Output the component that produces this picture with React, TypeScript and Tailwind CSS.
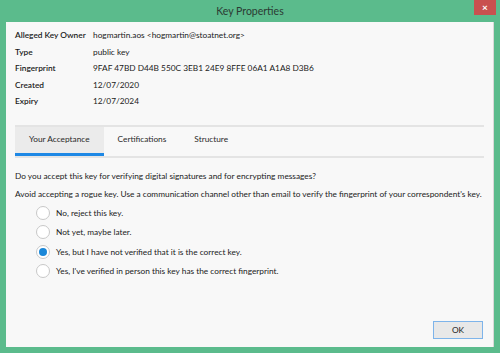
import { useState } from 'react';

const font = { fontFamily: 'Lato, "Noto Sans", sans-serif' };

const props = [
  ['Alleged Key Owner', 'hogmartin.aos <hogmartin@stoatnet.org>'],
  ['Type', 'public key'],
  ['Fingerprint', '9FAF 47BD D44B 550C 3EB1 24E9 8FFE 06A1 A1A8 D3B6'],
  ['Created', '12/07/2020'],
  ['Expiry', '12/07/2024'],
];

const choices = [
  'No, reject this key.',
  'Not yet, maybe later.',
  'Yes, but I have not verified that it is the correct key.',
  "Yes, I've verified in person this key has the correct fingerprint.",
];

export default function App() {
  const [picked, setPicked] = useState(2);
  const [tab, setTab] = useState(0);
  const tabs = ['Your Acceptance', 'Certifications', 'Structure'];

  return (
    <div
      className="w-[500px] h-[353px] bg-[#5bbb8c] flex flex-col text-[#1a1a1a]"
      style={font}
    >
      {/* title bar */}
      <div className="h-[22px] flex items-start relative">
        <div className="flex-1 text-center text-[10.5px] leading-[23px] text-[#2b3a33]">
          Key Properties
        </div>
        <button className="absolute right-[4px] top-0 w-[22px] h-[15px] bg-[#c9504f] text-white text-[10px] leading-[15px] font-bold">
          ×
        </button>
      </div>

      <div className="flex-1 mx-[6px] mb-[6px] bg-[#f8f8f8] border-r border-[#d8d8d8] flex flex-col text-[8.3px]">
        <div className="pl-[9px] pt-[5px] grid grid-cols-[78px_1fr]">
          {props.map(([k, v]) => (
            <div key={k} className="contents">
              <div className="font-semibold whitespace-nowrap h-[16.5px] leading-[16.5px]">{k}</div>
              <div className="whitespace-nowrap h-[16.5px] leading-[16.5px]">{v}</div>
            </div>
          ))}
        </div>

        <div className="ml-[9px] mr-[9px] mt-[15px] border-t-[2px] border-b-[2px] border-[#e4e4e4] flex">
          {tabs.map((t, i) => (
            <button
              key={t}
              onClick={() => setTab(i)}
              className={
                i === tab
                  ? 'h-[29px] px-[14px] bg-[#ebebeb] border-b-[3px] border-[#1e88e5] text-[#2a2a2a]'
                  : 'h-[29px] px-[14px] border-b-[3px] border-transparent text-[#2a2a2a]'
              }
            >
              {t}
            </button>
          ))}
        </div>

        <div className="pl-[9px] pt-[9px] leading-[18px] whitespace-nowrap">
          Do you accept this key for verifying digital signatures and for encrypting messages?
        </div>
        <div className="pl-[9px] leading-[18px] whitespace-nowrap">
          Avoid accepting a rogue key. Use a communication channel other than email to verify the
          fingerprint of your correspondent's key.
        </div>

        <div className="pl-[30px] pt-[1px] flex flex-col">
          {choices.map((c, i) => (
            <label key={c} className="h-[19.3px] flex items-center gap-[6px]" onClick={() => setPicked(i)}>
              <span className="w-[14px] h-[14px] rounded-full bg-white border border-[#c8c8c8] flex items-center justify-center">
                {picked === i && <span className="w-[8px] h-[8px] rounded-full bg-[#1a87d8]" />}
              </span>
              <span>{c}</span>
            </label>
          ))}
        </div>

        <div className="flex-1" />
        <div className="flex justify-end pr-[10px] pb-[8px]">
          <button className="w-[50px] h-[18px] bg-[#e8e8e8] border border-[#7eb4ea]">
            OK
          </button>
        </div>
      </div>
    </div>
  );
}
